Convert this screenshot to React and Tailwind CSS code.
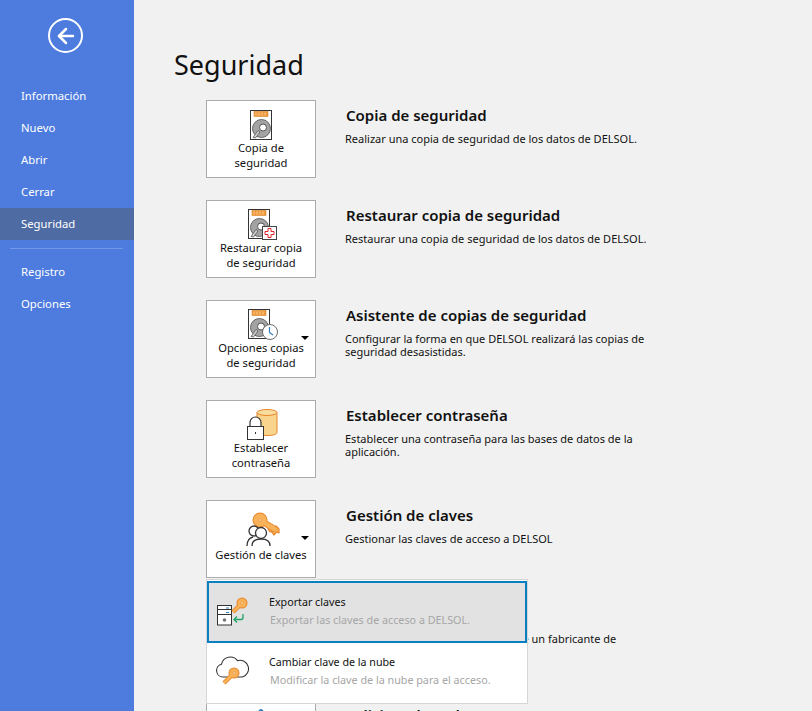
import { ArrowLeft } from "lucide-react";

const font = { fontFamily: '"Noto Sans", "Open Sans", sans-serif' };

const Disk = () => (
  <>
    <rect x="6.5" y="0.5" width="21" height="29" fill="#fff" stroke="#333" />
    <rect x="10" y="1.5" width="14" height="5" fill="#f09a3e" stroke="#d9822b" strokeWidth="0.6" />
    <path d="M12 2.5v3M15 2.5v3M18 2.5v3M21 2.5v3" stroke="#fbd9a8" strokeWidth="0.8" />
    <circle cx="17.5" cy="18.5" r="9" fill="#a3a3a3" stroke="#666" />
    <circle cx="19" cy="17.5" r="3.5" fill="#fff" stroke="#555" />
    <path d="M14 20.5l-5 7 2.5 0.5 4.5-6z" fill="#d0d0d0" stroke="#555" strokeWidth="0.8" />
  </>
);

const CopyIcon = () => (
  <svg width="34" height="30" viewBox="0 0 34 30"><Disk /></svg>
);

const RestoreIcon = () => (
  <svg width="34" height="31" viewBox="0 0 34 31">
    <g transform="translate(-2 0)"><Disk /></g>
    <rect x="18.5" y="17.5" width="14" height="13" fill="#fff" stroke="#444" />
    <path d="M24 19.5h3v3h3v3h-3v3h-3v-3h-3v-3h3z" fill="#fff" stroke="#e0242c" strokeWidth="1" />
  </svg>
);

const ClockIcon = () => (
  <svg width="34" height="31" viewBox="0 0 34 31">
    <g transform="translate(-2 0)"><Disk /></g>
    <circle cx="26" cy="23" r="7.5" fill="#fff" stroke="#6b6b6b" />
    <path d="M25.5 18v5.5l3.5 2.5" fill="none" stroke="#2f7fc1" strokeWidth="1.2" />
  </svg>
);

const DbLockIcon = () => (
  <svg width="34" height="31" viewBox="0 0 34 31">
    <path d="M13 3.5v20c0 2 4.500 3 10 3s10-1 10-3v-20z" fill="#f8d48c" stroke="#e8862a" />
    <ellipse cx="23" cy="3.500" rx="10" ry="3" fill="#f9dd9f" stroke="#e8862a" />
    <path d="M6 18v-4.500a5.500 5.500 0 0 1 11 0v4.500" fill="#fff" stroke="#333" strokeWidth="1.2" />
    <rect x="3.500" y="17.500" width="16" height="13" fill="#fff" stroke="#333" />
    <path d="M11.500 23v2" stroke="#333" />
  </svg>
);

// key outline comes from a thick dark stroke under a thinner light one
const Key = ({ hx, hy, tx, ty, r = 5.5, w = 4.5 }) => {
  const line = `M${hx} ${hy}L${tx} ${ty}`;
  return (
    <g fill="none">
      <circle cx={hx} cy={hy} r={r} fill="#e8862a" />
      <path d={line} stroke="#e8862a" strokeWidth={w} />
      <circle cx={hx} cy={hy} r={r - 1} fill="#f8b35a" />
      <path d={line} stroke="#f8b35a" strokeWidth={w - 2} />
      <circle cx={hx} cy={hy} r={1.3} fill="#fde2b5" stroke="#e8862a" strokeWidth="0.6" />
    </g>
  );
};

const UsersKeyIcon = () => (
  <svg width="42" height="38" viewBox="0 0 42 38">
    <g transform="translate(5 0)">
      {/* teeth first, the shaft covers their inner ends */}
      <path d="M29 27l2.500-3 2.500 1 0-4-3-3-5 5z" fill="#f8b35a" stroke="#e8862a" strokeWidth="1.2" strokeLinejoin="round" />
      <path d="M23 21l2 3 3-1-2-5z" fill="#f8b35a" stroke="#e8862a" strokeWidth="1.2" strokeLinejoin="round" />
      <Key hx={15} hy={12} tx={31} ty={22} r={7.5} w={6.5} />
      <circle cx="9" cy="23" r="5" fill="#fff" stroke="#333" strokeWidth="1.3" />
      <path d="M2 38c0-5 2-8 6-9" fill="none" stroke="#333" strokeWidth="1.3" />
      <circle cx="16" cy="25" r="5.500" fill="#fff" stroke="#333" strokeWidth="1.3" />
      <path d="M7 38c0-5 3-7 9-7s9 2 9 7" fill="#fff" stroke="#333" strokeWidth="1.3" />
    </g>
  </svg>
);

const ExportIcon = () => (
  <svg width="36" height="30" viewBox="0 0 36 30">
    <rect x="3.500" y="9.500" width="14" height="19.500" fill="#fff" stroke="#333" />
    <path d="M3 13.500h14M3 18.500h14" stroke="#333" />
    <path d="M12 12h3M12 16.500h3" stroke="#2f7fc1" />
    <circle cx="10.500" cy="24" r="1.800" fill="#777" />
    <Key hx={28} hy={7} tx={19} ty={16} />
    <path d="M29 18v3.500a2 2 0 0 1-2 2h-7" fill="none" stroke="#21a366" strokeWidth="1.3" />
    <path d="M23 20.500l-3 3 3 3" fill="none" stroke="#21a366" strokeWidth="1.3" />
  </svg>
);

const CloudKeyIcon = () => (
  <svg width="36" height="31" viewBox="0 0 36 31">
    <path
      d="M9 21a6.500 6.500 0 0 1-1.500-12.800a9 9 0 0 1 16-3.500a7 7 0 0 1 5 16.300z"
      fill="#fff"
      stroke="#333"
      strokeWidth="1.100"
    />
    <Key hx={20} hy={17} tx={10} ty={27} />
  </svg>
);

// only its top pokes into the window
const CutOffIcon = () => (
  <svg width="34" height="37" viewBox="0 0 34 37">
    <ellipse cx="17" cy="8" rx="4" ry="8" fill="#2f7fc1" />
  </svg>
);

const rows = [
  {
    icon: <CopyIcon />,
    label: ["Copia de", "seguridad"],
    title: "Copia de seguridad",
    desc: "Realizar una copia de seguridad de los datos de DELSOL.",
  },
  {
    icon: <RestoreIcon />,
    label: ["Restaurar copia", "de seguridad"],
    title: "Restaurar copia de seguridad",
    desc: "Restaurar una copia de seguridad de los datos de DELSOL.",
  },
  {
    icon: <ClockIcon />,
    label: ["Opciones copias", "de seguridad"],
    title: "Asistente de copias de seguridad",
    desc: "Configurar la forma en que DELSOL realizará las copias de seguridad desasistidas.",
    caret: true,
  },
  {
    icon: <DbLockIcon />,
    label: ["Establecer", "contraseña"],
    title: "Establecer contraseña",
    desc: "Establecer una contraseña para las bases de datos de la aplicación.",
  },
  {
    icon: <UsersKeyIcon />,
    label: ["Gestión de claves"],
    title: "Gestión de claves",
    desc: "Gestionar las claves de acceso a DELSOL",
    caret: true,
  },
  {
    icon: null,
    label: ["Soporte"],
    title: "Soporte",
    desc: "Solicitar el acceso de soporte desde un fabricante de software.",
  },
  {
    icon: <CutOffIcon />,
    label: ["Solicitar clave"],
    title: "Solicitar clave de",
    desc: "",
  },
];

const navTop = ["Información", "Nuevo", "Abrir", "Cerrar", "Seguridad"];
const navBottom = ["Registro", "Opciones"];

const NavItem = ({ label }) => (
  <div
    className={`h-8 pl-[21px] flex items-center text-[11.3px] text-white ${
      label === "Seguridad" ? "bg-[#4e6ba3]" : ""
    }`}
  >
    {label}
  </div>
);

const Row = ({ row }) => {
  const single = row.label.length === 1;
  return (
    <div className="flex h-[100px] shrink-0">
      <div className="relative w-[110px] h-[78px] shrink-0 bg-white border border-[#ababab] flex flex-col items-center">
        <div className={`flex items-end justify-center shrink-0 ${single ? "h-[45px]" : "h-[39px]"}`}>
          {row.icon}
        </div>
        <div className={`flex flex-col items-center justify-center ${single ? "h-[16px]" : "h-[31px] -mt-px"}`}>
          {row.label.map((line) => (
            <div key={line} className="text-[11.2px] leading-[15px] text-[#111] whitespace-nowrap">
              {line}
            </div>
          ))}
        </div>
        {row.caret && (
          <div className="absolute right-[6px] top-[35px] w-0 h-0 border-x-[4px] border-x-transparent border-t-[4px] border-t-black" />
        )}
      </div>
      <div className="ml-[29px] w-[310px] pt-[3px]">
        <div className="ml-px text-[15px] leading-[24px] font-semibold text-[#111]">{row.title}</div>
        <div className="mt-[5px] text-[11px] leading-[13px] text-[#111]">{row.desc}</div>
      </div>
    </div>
  );
};

const PopupItem = ({ icon, title, desc, active }) => (
  <div
    className={`flex items-center border-2 ${
      active ? "h-[62px] pb-[2px] bg-[#e2e2e2] border-[#0a7fc4]" : "h-[60px] pb-[4px] border-transparent"
    }`}
  >
    <div className="w-[60px] pl-[5px] shrink-0">{icon}</div>
    <div>
      <div className="text-[10.7px] leading-[16px] text-[#111]">{title}</div>
      <div className="mt-[2px] ml-px text-[10.75px] leading-[16px] text-[#a6a6a6]">{desc}</div>
    </div>
  </div>
);

export default function App() {
  return (
    <div className="relative flex w-[812px] h-[711px] overflow-hidden bg-[#f1f1f1]" style={font}>
      {/* Sidebar */}
      <div className="w-[134px] shrink-0 bg-[#4d7bde]">
        <div className="h-[80px] pl-[48px] pt-[18px]">
          <div className="w-[35px] h-[35px] rounded-full border-2 border-white flex items-center justify-center">
            <ArrowLeft size={24} strokeWidth={2.5} className="text-white" />
          </div>
        </div>
        {navTop.map((n) => (
          <NavItem key={n} label={n} />
        ))}
        <div className="ml-[10px] mr-[11px] mt-[8px] mb-[7px] h-px bg-[#7397e6]" />
        {navBottom.map((n) => (
          <NavItem key={n} label={n} />
        ))}
      </div>

      {/* Main */}
      <div className="flex-1 min-w-0">
        <h1 className="h-[100px] pl-[40px] pt-[43px] text-[27px] leading-[44px] text-[#111]">Seguridad</h1>
        <div className="pl-[72px] flex flex-col">
          {rows.map((r) => (
            <Row key={r.title} row={r} />
          ))}
        </div>
      </div>

      {/* Dropdown */}
      <div className="absolute left-[206px] top-[579px] w-[322px] h-[125px] pt-px bg-white border border-[#d6d6d6]">
        <PopupItem
          active
          icon={<ExportIcon />}
          title="Exportar claves"
          desc="Exportar las claves de acceso a DELSOL."
        />
        <PopupItem
          icon={<CloudKeyIcon />}
          title="Cambiar clave de la nube"
          desc="Modificar la clave de la nube para el acceso."
        />
      </div>
    </div>
  );
}
